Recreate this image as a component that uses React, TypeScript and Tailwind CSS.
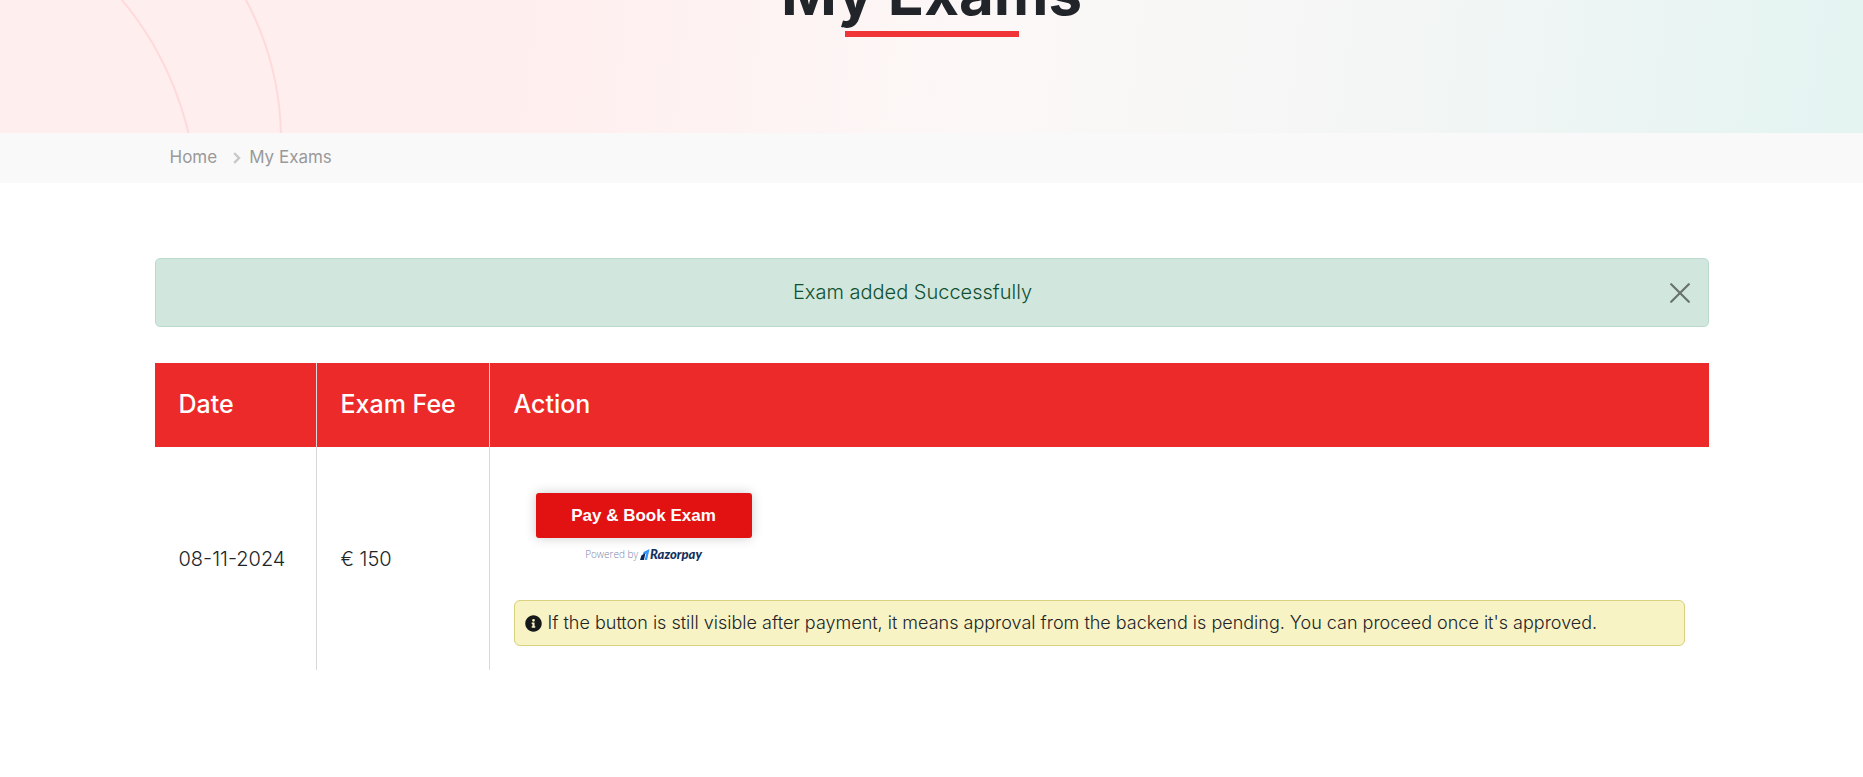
import { useState } from "react";

interface ExamRow {
  id: number;
  date: string;
  fee: string;
}

const exams: ExamRow[] = [{ id: 1, date: "08-11-2024", fee: "€ 150" }];

function PageBanner({ title }: { title: string }) {
  return (
    <header className="relative overflow-hidden bg-[linear-gradient(97deg,#ffeeee_0%,#ffeeee_28%,#fcf8f7_52%,#f3f6f5_75%,#e3f4f1_100%)] pb-24">
      {/* Decorative rings */}
      <svg className="absolute left-0 top-0 h-full w-80" fill="none" stroke="#ffdada" strokeWidth="2" aria-hidden="true">
        <circle cx="-126" cy="207" r="323" />
        <circle cx="-16" cy="140" r="297" />
      </svg>
      <div className="relative flex flex-col items-center">
        <h1 className="-mt-11 text-[60px] font-bold leading-[75px] text-[#212529]">{title}</h1>
        <span className="block h-[6px] w-[174px] bg-[#ef3538]" />
      </div>
    </header>
  );
}

function Breadcrumb() {
  return (
    <nav className="bg-[#f9f9f9]" aria-label="Breadcrumb">
      <ol className="mx-auto flex h-[50px] max-w-[1554px] items-center px-[15px] text-[17px] text-[#999999]">
        <li>
          <a href="#home">Home</a>
        </li>
        <li className="flex items-center">
          <svg className="ml-4 mr-2 h-3 w-2" viewBox="0 0 8 12" fill="none" stroke="#c8c8c8" strokeWidth="2.4" aria-hidden="true">
            <path d="M1.2 1.2 6 6l-4.8 4.8" />
          </svg>
          <span aria-current="page">My Exams</span>
        </li>
      </ol>
    </nav>
  );
}

function SuccessAlert({ message, onClose }: { message: string; onClose: () => void }) {
  return (
    <div role="alert" className="mb-9 flex items-center rounded-[5px] border border-[#badbcc] bg-[#d1e7dd] py-4 pl-4 pr-[18px]">
      <p className="flex-1 pr-4 text-center text-[20px] font-light leading-[35px] text-[#0f5132]">{message}</p>
      <button type="button" aria-label="Close" onClick={onClose} className="cursor-pointer">
        <svg className="h-5 w-5" viewBox="0 0 20 20" fill="none" stroke="#68736e" strokeWidth="2.2" strokeLinecap="round">
          <path d="M1.2 1.2 18.8 18.8M18.8 1.2 1.2 18.8" />
        </svg>
      </button>
    </div>
  );
}

function PaymentButton() {
  return (
    <div className="flex w-[216px] flex-col items-center">
      <button
        type="button"
        className="h-[45px] w-full cursor-pointer rounded-[3px] bg-[#e31212] font-['Liberation_Sans',Arial,sans-serif] text-[17px] font-bold text-white shadow-[0_0_12px_rgba(0,0,0,0.2)]"
      >
        Pay &amp; Book Exam
      </button>
      <div className="mt-2 flex h-4 items-center gap-0.5">
        <span className="font-['Open_Sans',sans-serif] text-[10px] text-[#7b86a8]">Powered by</span>
        <span className="flex items-center">
          <svg className="h-[11px] w-[10px]" viewBox="0 0 9 10" aria-hidden="true">
            <path d="M3.2 2.8 8.6 0 6.4 10H4.2L5.7 3.8 2.4 5.5z" fill="#3395ff" />
            <path d="M1.2 5.8 5 3.6 3.5 10H0z" fill="#072654" />
          </svg>
          <span className="font-['Lato',sans-serif] text-[13px] font-black italic leading-4 text-[#12305f]">Razorpay</span>
        </span>
      </div>
    </div>
  );
}

function PendingNotice() {
  return (
    <div className="flex items-center gap-1.5 rounded-[6px] border border-[#d9d080] bg-[#f8f3c4] px-2.5 py-2 text-[18px] font-light leading-7 text-[#212529]">
      <svg className="h-[17px] w-[17px] shrink-0" viewBox="0 0 512 512" fill="#16181a" aria-hidden="true">
        <path d="M256 8C119 8 8 119 8 256s111 248 248 248 248-111 248-248S393 8 256 8zm0 110a42 42 0 1 1 0 84 42 42 0 0 1 0-84zm56 254c0 7-5 12-12 12h-88c-7 0-12-5-12-12v-24c0-7 5-12 12-12h12v-64h-12c-7 0-12-5-12-12v-24c0-7 5-12 12-12h64c7 0 12 5 12 12v100h12c7 0 12 5 12 12v24z" />
      </svg>
      <p>If the button is still visible after payment, it means approval from the backend is pending. You can proceed once it's approved.</p>
    </div>
  );
}

export default function App() {
  const [showAlert, setShowAlert] = useState(true);

  return (
    <div className="bg-white font-['Inter',sans-serif]">
      <PageBanner title="My Exams" />
      <Breadcrumb />

      <main className="mx-auto max-w-[1554px] pb-[107px] pt-[75px]">
        {showAlert && <SuccessAlert message="Exam added Successfully" onClose={() => setShowAlert(false)} />}

        <table className="w-full border-separate border-spacing-0 text-left text-[#212529]">
          <thead>
            <tr className="h-[84px] bg-[#ed2a2a] text-[25px] text-white">
              <th className="w-[162px] border-r border-[#d8d8d8] px-6 font-medium">Date</th>
              <th className="w-[173px] border-r border-[#d8d8d8] px-6 font-medium">Exam Fee</th>
              <th className="px-6 font-medium">Action</th>
            </tr>
          </thead>
          <tbody className="text-[20px] font-light">
            {exams.map((exam) => (
              <tr key={exam.id}>
                <td className="whitespace-nowrap border-r border-[#d8d8d8] px-6">{exam.date}</td>
                <td className="whitespace-nowrap border-r border-[#d8d8d8] px-6">{exam.fee}</td>
                <td className="px-6 pb-6 pt-[46px]">
                  <div className="mb-[38px] ml-[22px]">
                    <PaymentButton />
                  </div>
                  <PendingNotice />
                </td>
              </tr>
            ))}
          </tbody>
        </table>
      </main>
    </div>
  );
}
